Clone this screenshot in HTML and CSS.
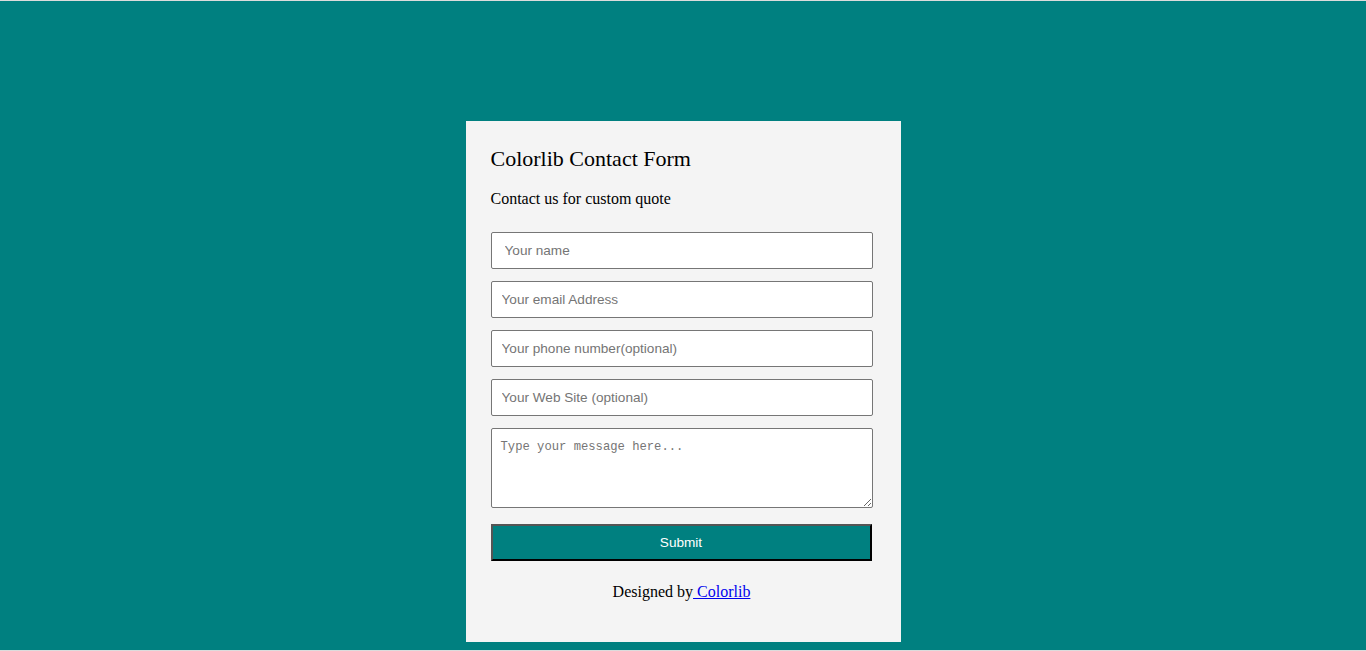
FILE: index.html
```html
<!DOCTYPE html>
<html lang="en">
<head>
<meta charset="utf-8">
<title>Colorlib Contact Form</title>
<link rel="stylesheet" href="styles.css">
</head>
<body>
  <div class="card">
    <h1 class="title">Colorlib Contact Form</h1>
    <p class="lead">Contact us for custom quote</p>
    <form class="form">
      <input class="field field-name" type="text" placeholder="Your name">
      <input class="field" type="email" placeholder="Your email Address">
      <input class="field" type="text" placeholder="Your phone number(optional)">
      <input class="field" type="text" placeholder="Your Web Site (optional)">
      <textarea class="message" placeholder="Type your message here..."></textarea>
      <button class="submit" type="button">Submit</button>
    </form>
    <p class="credit">Designed by<a href="#"> Colorlib</a></p>
  </div>
</body>
</html>
```

FILE: styles.css
```css
html {
  background: #dcdcdc;
}
body {
  margin: 1px 0 0;
  height: 649px;
  box-sizing: border-box;
  padding-top: 120px;
  background: #008080;
  font-family: "Liberation Serif", "Times New Roman", serif;
}
.card {
  width: 435px;
  box-sizing: border-box;
  margin: 0 auto;
  padding: 24px 28px 41px 25px;
  background: #f4f4f4;
  color: #000;
}
.title {
  margin: 0;
  font-size: 22px;
  line-height: 27px;
  font-weight: normal;
}
.lead {
  margin: 17px 0 0;
  font-size: 16px;
  line-height: 19px;
}
.form {
  margin-top: 24px;
  display: flex;
  flex-direction: column;
  gap: 12px;
}
.field {
  width: 382px;
  height: 37px;
  box-sizing: border-box;
  margin: 0;
  border: 1px solid #767676;
  border-radius: 2px;
  padding: 0 10px;
  background: #fff;
  font-family: "Liberation Sans", Arial, sans-serif;
  font-size: 13.6px;
  color: #000;
}
.field-name {
  padding-left: 13px;
}
.field::placeholder,
.message::placeholder {
  color: #757575;
}
.message {
  width: 382px;
  height: 80px;
  box-sizing: border-box;
  margin: 0;
  border: 1px solid #767676;
  border-radius: 2px;
  padding: 11px 9px;
  background: #fff;
  font-family: "Liberation Mono", "DejaVu Sans Mono", monospace;
  font-size: 12.2px;
  line-height: 15px;
  resize: both;
}
.submit {
  width: 381px;
  height: 37px;
  box-sizing: border-box;
  margin: 4px 0 0;
  padding: 0;
  background: #008080;
  color: #fff;
  border-style: solid;
  border-width: 2px;
  border-color: #555 #000 #000 #555;
  font-family: "Liberation Sans", Arial, sans-serif;
  font-size: 13.6px;
}
.credit {
  margin: 21px 0 0;
  font-size: 16px;
  line-height: 19px;
  text-align: center;
}
.credit a {
  color: #0000ee;
  text-decoration: underline;
}
```
